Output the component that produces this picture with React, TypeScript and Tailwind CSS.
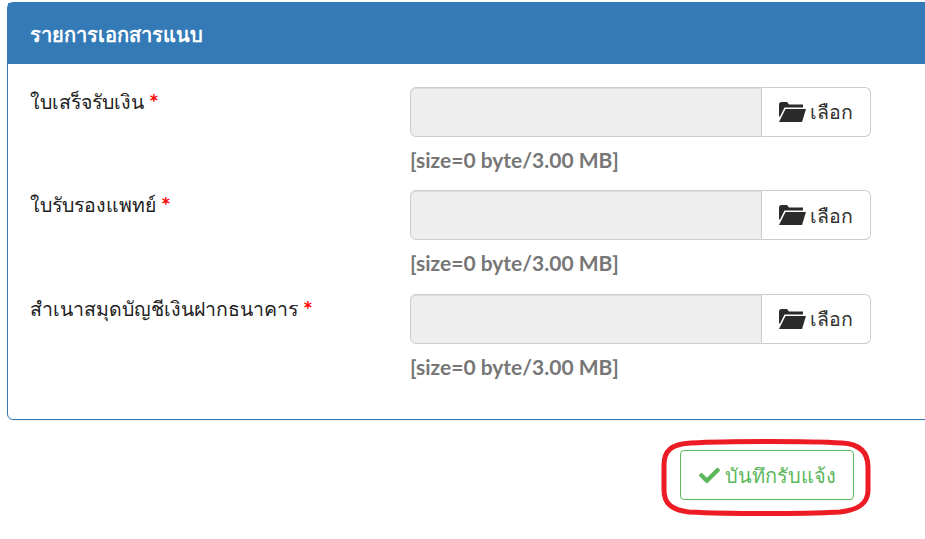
import { FaCheck } from "react-icons/fa";

const rows = [
  { label: "ใบเสร็จรับเงิน" },
  { label: "ใบรับรองแพทย์" },
  { label: "สำเนาสมุดบัญชีเงินฝากธนาคาร" },
];

function FolderIcon() {
  return (
    <svg width="27" height="20" viewBox="0 0 27 20" fill="#2b2b2b" className="shrink-0">
      <path d="M0 2.5C0 1 1 0 2.5 0H8L10 2.5H24V5.5H5.5L1 14.5H0Z" />
      <path d="M6.5 7H27L23 20H0Z" />
    </svg>
  );
}

function FileRow({ label }: { label: string }) {
  return (
    <div className="flex h-[103.5px]">
      <div className="w-[402px] shrink-0 pl-[22px] text-[19.5px] leading-[30px] text-[#222]">
        {label} <span className="align-[-2px] text-[23px] leading-none font-bold text-[#f00]">*</span>
      </div>
      <div className="w-[461px] shrink-0">
        <div className="flex h-[50px]">
          <div className="w-[352px] rounded-l-[6px] border border-[#ccc] bg-[#eee] shadow-[inset_0_1px_1px_rgba(0,0,0,0.075)]" />
          <div className="flex w-[109px] items-center justify-center gap-[4px] rounded-r-[6px] border border-l-0 border-[#ccc] bg-white text-[19.5px] text-[#333]">
            <FolderIcon />
            <span>เลือก</span>
          </div>
        </div>
        <div className="mt-[10px] text-[21px] font-bold leading-[26px] text-[#777]">
          [size=0 byte/3.00 MB]
        </div>
      </div>
    </div>
  );
}

export default function App() {
  return (
    <div className="relative h-[539px] w-[925px] overflow-hidden bg-white pt-[2px] pl-[7px] font-['Lato','Noto_Sans',sans-serif]">
      <div className="h-[418px] w-[940px] rounded-[6px] border border-[#337ab7] shadow-[0_1px_1px_rgba(0,0,0,0.05)]">
        <div className="flex h-[61px] items-center bg-[#337ab7] pl-[22px] text-[20px] font-bold text-white">
          รายการเอกสารแนบ
        </div>
        <div className="pt-[22.9px]">
          {rows.map((r) => (
            <FileRow key={r.label} label={r.label} />
          ))}
        </div>
      </div>
      <div className="mt-[30px] ml-[673px] flex h-[50px] w-[174px] items-center justify-center gap-[5px] rounded-[4px] border border-[#5cb85c] bg-white text-[20px] text-[#5cb85c]">
        <FaCheck className="h-[21px] w-[21px]" />
        <span>บันทึกรับแจ้ง</span>
      </div>
      <svg className="absolute top-[438px] left-[659px]" width="214" height="80" viewBox="0 0 214 80" fill="none">
        <path
          d="M32 5 C70 3 150 3 183 5 C201 6 209 15 209 29 L209 52 C209 66 199 72 181 74 C140 76 70 76 30 74 C12 72 5 65 5 52 L5 27 C5 13 12 6 32 5 Z"
          stroke="#ed1c24"
          strokeWidth="5"
        />
      </svg>
    </div>
  );
}
